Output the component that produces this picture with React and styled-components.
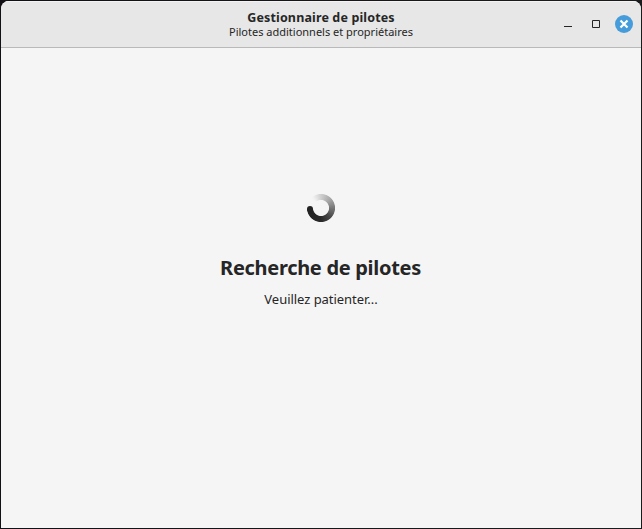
import React from "react";
import styled, { createGlobalStyle } from "styled-components";

const GlobalStyle = createGlobalStyle`
  * { box-sizing: border-box; }
  body { margin: 0; background: linear-gradient(90deg, #121014, #1b1b1d); font-family: "Noto Sans", "Open Sans", sans-serif; color: #262626; }
`;

const Frame = styled.div`
  width: 642px;
  height: 529px;
  padding: 1px;
`;

const Window = styled.main`
  display: flex;
  flex-direction: column;
  height: 100%;
  overflow: hidden;
  border-radius: 8px 8px 0 0;
  background: #f5f5f5;
`;

const TitleBar = styled.header`
  display: grid;
  grid-template-columns: 1fr auto 1fr;
  align-items: center;
  height: 47px;
  flex: none;
  background: #e7e7e7;
  border-bottom: 1px solid #b9b9b9;
  box-shadow: inset 0 1px #f3f3f3;
`;

const Titles = styled.div`
  display: flex;
  flex-direction: column;
  grid-column: 2;
  padding: 1px 0;
  text-align: center;
  white-space: nowrap;
`;

const Title = styled.h1`
  margin: 0;
  font-size: 12.5px;
  line-height: 14px;
  font-weight: 700;
  letter-spacing: 0.14px;
`;

const Subtitle = styled.p`
  margin: 0;
  font-size: 11px;
  line-height: 13px;
`;

const Controls = styled.div`
  display: flex;
  justify-self: end;
  gap: 10px;
  padding-right: 8px;
`;

const ControlButton = styled.button`
  display: grid;
  place-items: center;
  width: 18px;
  height: 18px;
  padding: 0;
  border: 0;
  border-radius: 50%;
  color: ${(p) => (p.$accent ? "#fff" : "#262626")};
  background: ${(p) => (p.$accent ? "#469cdb" : "transparent")};
`;

const Content = styled.section`
  display: flex;
  flex: 1;
  flex-direction: column;
  align-items: center;
  padding-top: 145px;
`;

const Spinner = styled.div`
  position: relative;
  width: 30px;
  height: 30px;

  &::before {
    content: "";
    display: block;
    width: 100%;
    height: 100%;
    border-radius: 50%;
    background: conic-gradient(#cfcfcf, #a8a8a8 45deg, #777 90deg, #484848 135deg, #292929 180deg, #232323 264deg, transparent 265deg, transparent 315deg, #f0f0f0 325deg, #cfcfcf 360deg);
    mask: radial-gradient(circle, transparent 7.6px, #000 8.4px, #000 13.6px, transparent 14.4px);
  }

  &::after {
    content: "";
    position: absolute;
    left: 1px;
    top: 13px;
    width: 6px;
    height: 6px;
    border-radius: 50%;
    background: #232323;
  }
`;

const Heading = styled.h2`
  margin: 31px 0 0;
  font-size: 20px;
  line-height: 28px;
  font-weight: 700;
  letter-spacing: -0.3px;
  padding-right: 1px;
`;

const Message = styled.p`
  margin: 8px 0 0;
  font-size: 13px;
  line-height: 18px;
  letter-spacing: -0.04px;
`;

export default function App() {
  return (
    <>
      <GlobalStyle />
      <Frame>
        <Window>
          <TitleBar>
            <Titles>
              <Title>Gestionnaire de pilotes</Title>
              <Subtitle>Pilotes additionnels et propriétaires</Subtitle>
            </Titles>
            <Controls>
              <ControlButton aria-label="Réduire">
                <svg width="18" height="18"><path d="M5 11.5h8" stroke="currentColor" /></svg>
              </ControlButton>
              <ControlButton aria-label="Agrandir">
                <svg width="18" height="18"><path d="M5.5 5.5h7v7h-7z" fill="none" stroke="currentColor" /></svg>
              </ControlButton>
              <ControlButton $accent aria-label="Fermer">
                <svg width="18" height="18"><path d="M5.5 5.5l7 7m0-7l-7 7" stroke="currentColor" strokeWidth="2.2" /></svg>
              </ControlButton>
            </Controls>
          </TitleBar>
          <Content>
            <Spinner role="status" />
            <Heading>Recherche de pilotes</Heading>
            <Message>Veuillez patienter...</Message>
          </Content>
        </Window>
      </Frame>
    </>
  );
}
